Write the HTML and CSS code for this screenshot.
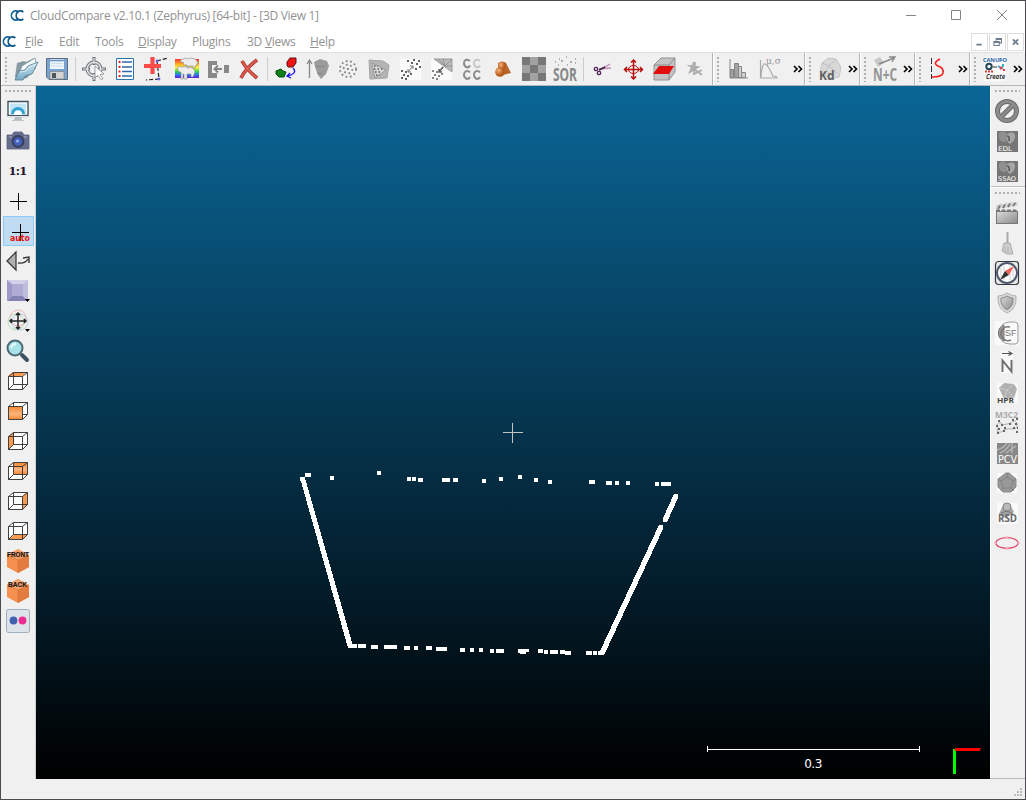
FILE: index.html
```
<!DOCTYPE html>
<html lang="en">
<head>
<meta charset="utf-8">
<title>CloudCompare v2.10.1 (Zephyrus) [64-bit] - [3D View 1]</title>
<link rel="stylesheet" href="styles.css">
</head>
<body>
<svg class="defs" width="0" height="0">
  <defs>
    <linearGradient id="blue" x1="0" y1="0" x2="0" y2="1"><stop offset="0" stop-color="#cdeaf5"/><stop offset="1" stop-color="#78a9c6"/></linearGradient>
    <linearGradient id="grey" x1="0" y1="0" x2="1" y2="1"><stop offset="0" stop-color="#d8d8d8"/><stop offset="1" stop-color="#8c8c8c"/></linearGradient>
    <linearGradient id="rain" x1="0" y1="0" x2="0" y2="1"><stop offset="0" stop-color="#f33"/><stop offset=".25" stop-color="#ffa51e"/><stop offset=".45" stop-color="#fff335"/><stop offset=".65" stop-color="#38d83a"/><stop offset=".82" stop-color="#267dff"/><stop offset="1" stop-color="#6818cf"/></linearGradient>
    <linearGradient id="orange" x1="0" y1="0" x2="0" y2="1"><stop offset="0" stop-color="#f58a35"/><stop offset=".6" stop-color="#ffb57d"/><stop offset="1" stop-color="#f58a35"/></linearGradient>
    <radialGradient id="copper" cx=".35" cy=".35"><stop offset="0" stop-color="#f5b078"/><stop offset="1" stop-color="#b65a1c"/></radialGradient>
    <g id="cc" fill="none" stroke-width="1.7"><path d="M9.500 4A4.300 4.600 0 1 0 9.500 11" stroke="#12649a"/><path d="M14.300 4A4.300 4.600 0 1 0 14.300 11" stroke="#0b5486"/></g>
    <path id="cube" d="M2.500 7.500h14v13h-14zM7.500 3.500h14v12h-14zM2.500 7.500l5-4M16.500 7.500l5-4M16.500 20.500l5-5M2.500 20.500l5-5" fill="none" stroke="#2c2c2c" stroke-width=".9"/>
    <g id="box"><path d="M12 0l11 6v12l-11 6-11-6V6z" fill="#f5904f"/><path d="M12 11l11-5v12l-11 6z" fill="#e27c40"/><path d="M1 6l11-6 11 6-11 5z" fill="#f9a36c"/><path d="M1 6l11 5 11-5M12 11v13" fill="none" stroke="#d06c35" stroke-width=".6"/></g>
    <g id="blob"><rect x="2" y="2" width="21" height="21" fill="#757575"/><path d="M4 4q7-4 8 3t-4 6q-5-1-4-9z" fill="#8f8f8f"/><path d="M12 5q7-4 8 1t-5 9q-4-2-3-10z" fill="#a6a6a6"/><path d="M12 7q3 0 2 5" stroke="#555" fill="none" stroke-width="1.500"/></g>
    <path id="more" d="M1 1l3 3-3 3M5.500 1l3 3-3 3" fill="none" stroke="#000" stroke-width="1.6"/>
  </defs>
</svg>
<div class="window">
  <header class="title">
    <svg class="logo" viewBox="0 0 15 15"><use href="#cc"/></svg>
    <span class="caption">CloudCompare v2.10.1 (Zephyrus) [64-bit] - [3D View 1]</span>
    <svg class="controls" viewBox="0 0 104 12"><path d="M0 6.500h10M45.500 1.500h9v9h-9zM91 1l10 10M101 1l-10 10" fill="none" stroke="#858585"/></svg>
  </header>
  <nav class="menu">
    <svg class="logo" viewBox="0 0 15 15"><use href="#cc"/></svg>
    <span class="m-file"><u>F</u>ile</span><span class="m-edit">Edit</span><span class="m-tools">Tools</span><span class="m-display"><u>D</u>isplay</span><span class="m-plugins">Plugins</span><span class="m-views">3D <u>V</u>iews</span><span class="m-help"><u>H</u>elp</span>
    <div class="mdi">
      <svg viewBox="0 0 17 17"><path d="M5 11.500h6" stroke="#6d7c8b" stroke-width="2"/></svg>
      <svg viewBox="0 0 17 17"><path d="M7 7V4.500h6v5h-2M7 5.500h6M4.500 8h6v4.500h-6zM4.500 9h6" fill="none" stroke="#6d7c8b" stroke-width="1.200"/></svg>
      <svg viewBox="0 0 17 17"><path d="M5.500 5.500l6 6M11.500 5.500l-6 6" stroke="#6d7c8b" stroke-width="2"/></svg>
    </div>
  </nav>

  <div class="tools">
    <section class="group main">
      <i class="grip"></i>
      <b><svg viewBox="0 0 24 24"><path d="M1 20L3 6l7-2 2 1 8-4 2 2v8l-9 10-9 2z" fill="#8799a3"/><path d="M4 19L8 9 21 1l1 5-9 12-9 5z" fill="#f5fafb" stroke="#70848e" stroke-width=".6"/><path d="M1 23l4-9 6-1 3-4 10-4-6 12-7 2-2 4z" fill="url(#blue)" stroke="#5d8194" stroke-width=".9"/><path d="M6 15l6-1 3-4 7-3" stroke="#e6f7fb" fill="none" stroke-width=".8"/></svg></b>
      <b><svg viewBox="0 0 24 24"><path d="M1.500 1.500h21v21H4l-2.500-2.500z" fill="#7ba3cf" stroke="#5a6c80"/><path d="M5 2h14v10H5z" fill="#edf5fc"/><path d="M5 3.500h14" stroke="#6d93c8" stroke-width="1.600"/><path d="M6 6.500h12M6 9h12" stroke="#cddcec"/><path d="M5 14.500h14V22H5z" fill="#d2d4d2" stroke="#7b8388" stroke-width=".7"/><path d="M7 16h4v5H7z" fill="#4c565d"/></svg></b>
      <i class="sep"></i>
      <b><svg viewBox="0 0 24 24"><circle cx="12" cy="12" r="6.800" fill="none" stroke="#6d7479" stroke-width="3.400"/><path d="M12 0v8M12 16v8M0 12h8M16 12h8" stroke="#6d7479" stroke-width="3"/><circle cx="12" cy="12" r="6.800" fill="none" stroke="#e3e5e7" stroke-width="1.500"/><path d="M12 1v6M12 17v6M1 12h6M17 12h6" stroke="#e3e5e7" stroke-width="1.200"/><path d="M13 9l9 8-4 .5 3 4-2 1-3-4-3 2z" fill="#fff" stroke="#888" stroke-width=".8"/></svg></b>
      <b><svg viewBox="0 0 24 24"><path d="M3.500 1.500h17v21h-17z" fill="#fff" stroke="#2d74aa"/><path d="M9 5h10M9 10h10M9 14.500h10M9 19h10" stroke="#2f65aa" stroke-width="1.600"/><path d="M5.500 5h2M5.500 10h2M5.500 14.500h2M5.500 19h2" stroke="#e42020" stroke-width="2"/></svg></b>
      <b><svg viewBox="0 0 24 24"><path d="M13 4L24 1M13 4l2 18-13 1" stroke="#222" stroke-width="1.200" stroke-dasharray="4 2" fill="none"/><path d="M8.500 0v17M0 9h17" stroke="#fa4b4b" stroke-width="4.200"/><circle cx="13" cy="4" r="1.400" fill="#5e62ec"/><circle cx="15" cy="22" r="1.400" fill="#5e62ec"/></svg></b>
      <b><svg viewBox="0 0 24 24"><path d="M0 2h24v19H0z" fill="url(#rain)"/><path d="M5 5q1-4 4-3 1-2 3 0 4-2 8 0l3 3-2 4h-1v2h-2V9h-4v2h-2V8H9L8 5zM2 11q2-3 5-1 6-2 10 1 3 1 3 4l-2 5h-2v-3h-4v5H9v-5H8v5H6v-7H4z" fill="#ededed" stroke="#858585" stroke-width=".6"/></svg></b>
      <b><svg viewBox="0 0 24 24"><path d="M2 4h9v4H6v8h5v5H2z" fill="#898989"/><path d="M8 12h8M12 8.500L8.500 12l3.500 3.500" stroke="#858585" stroke-width="2" fill="none"/><path d="M18 8h5v8h-5z" fill="#898989"/></svg></b>
      <b><svg viewBox="0 0 24 24"><path d="M5 4q5 9 15 17M20 3Q9 11 4 21" fill="none" stroke="#a73128" stroke-width="3.600"/><path d="M5 4q5 9 15 17M20 3Q9 11 4 21" fill="none" stroke="#dc5b4d" stroke-width="2"/></svg></b>
      <i class="sep"></i>
      <b><svg viewBox="0 0 24 24"><path d="M13 5l3-4h6v5l-3 4h-5l-1-2z" fill="#f01313" stroke="#631010"/><path d="M2 14l5-2 2 2 3 1-2 5H5l-3-3z" fill="#11811a" stroke="#064c0a"/><path d="M19 11q5 5-5 8M16 16l-3 3 4 2" fill="none" stroke="#1713e5" stroke-width="1.300"/></svg></b>
      <b><svg viewBox="0 0 24 24"><path d="M4.500 21V3M2 7l2.500-4L7 7" stroke="#8b8b8b" stroke-width="1.400" fill="none"/><path d="M9 5l6-3 7 2 2 5-3 8-5 5-3-4-3-8z" fill="#9b9b9b"/><path d="M11 9l4 1 5-1M12 16l5 1" stroke="#858585" fill="none"/></svg></b>
      <b><svg viewBox="0 0 24 24"><g fill="none" stroke="#858585" stroke-width="1.800" stroke-dasharray="1.800 2.600"><circle cx="12" cy="12" r="8"/><circle cx="12" cy="12" r="4.300"/><path d="M11 12h2"/></g></svg></b>
      <b><svg viewBox="0 0 24 24"><path d="M2 3l14 1 6 4-2 13-17 1z" fill="#b4b4b4" stroke="#a5a5a5"/><path d="M5 6l14 7-11 8z" fill="#d8d8d8" stroke="#999"/><path d="M7 9h4M7 12h10M8 15h7M9 18h4" stroke="#5b5b5b" stroke-width="1.400" stroke-dasharray="1.500 2"/></svg></b>
      <b><svg viewBox="0 0 24 24"><path d="M2 2h21v21H2z" fill="#fafafa"/><path d="M10 15l5-6M15 12V9h-3M10 12v3h3" stroke="#777" fill="none"/><path d="M9 4h2M15 3h2M20 4h2M18 7h2M13 6h2M21 10h2M17 12h2M3 14h2M7 15h2M5 18h2M9 19h2M12 17h2M3 21h2M7 22h2" stroke="#606060" stroke-width="1.800"/></svg></b>
      <b><svg viewBox="0 0 24 24"><path d="M2 2h21v21H2z" fill="#fafafa"/><path d="M5 2h18v13z" fill="#bbb" stroke="#999"/><path d="M9 2l7 7 7-7M16 9l7 0M10 15l5-5M14 2l2 7" fill="none" stroke="#888" stroke-width=".8"/><path d="M10 15l4-5M10 12v3h3M3 14h2M7 15h2M5 18h2M9 19h2M12 17h2M3 21h2M7 22h2" fill="none" stroke="#606060" stroke-width="1.500"/></svg></b>
      <b><svg viewBox="0 0 24 24"><g fill="none" stroke="#8c8c8c" stroke-width="2"><path d="M10 4Q8 2 5.500 3 4 4 4 6.500t3 4q2 0 3-2M10 15.500Q8 13 5.500 14.500 4 15.500 4 18t3 4q2 0 3-2M20 15.500q-2-2.500-4.500-1-1.500 1-1.500 3.500t3 4q2 0 3-2"/><path stroke="#c8c8c8" d="M20 4q-2-2-4.500-1Q14 4 14 6.500t3 4q2 0 3-2"/></g></svg></b>
      <b><svg viewBox="0 0 24 24"><path d="M7 6q4-3 8 0v8H7z" fill="url(#copper)"/><path d="M15 6l5 10-8 2z" fill="#b8652b"/><circle cx="9" cy="15" r="4.800" fill="url(#copper)"/></svg></b>
      <b><svg viewBox="0 0 24 24"><path d="M0 0h24v24H0z" fill="#777"/><path d="M8 0h8v8H8zM0 8h8v8H0zM16 8h8v8h-8zM8 16h8v8H8z" fill="#a2a2a2"/></svg></b>
      <b><svg viewBox="0 0 24 24"><path d="M2 5h1M6 2h1M8 4h2M13 0h1M17 5h2M22 2h1M22 6h1M5 8h1M14 8h1" stroke="#999" stroke-width="1.600"/><text x="12" y="24" class="sor" textLength="24" lengthAdjust="spacingAndGlyphs">SOR</text></svg></b>
      <i class="sep"></i>
      <b><svg viewBox="0 0 24 24"><path d="M10 13l10-6M9 12l12-1" stroke="#c08cbc" stroke-width="1.400"/><path d="M9 13l6-3" stroke="#332039" stroke-width="1.500"/><circle cx="6" cy="12" r="1.700" fill="none" stroke="#52205c" stroke-width="1.300"/><circle cx="9" cy="16" r="1.700" fill="none" stroke="#52205c" stroke-width="1.300"/></svg></b>
      <b><svg viewBox="0 0 24 24"><path d="M12.500 3v19M10 5.500L12.500 3 15 5.500M10 19.500l2.500 2.500 2.500-2.500M4 12.500h17M6 10l-2.500 2.500L6 15M19 10l2.500 2.500L19 15" fill="none" stroke="#bb0b0b" stroke-width="1.500"/><ellipse cx="12.500" cy="12.500" rx="5" ry="4" fill="none" stroke="#bb0b0b" stroke-width="1"/></svg></b>
      <b><svg viewBox="0 0 24 24"><path d="M2 8l7-7h14v14l-6 8H2z" fill="#c3c3c3" stroke="#929292"/><path d="M2 8h15v15M17 8l6-7" fill="none" stroke="#8b8b8b"/><path d="M1 17l6-8h15l-5 8z" fill="#e20d0d"/></svg></b>
      <b><svg viewBox="0 0 24 24"><path d="M11 5L7 15l8-5-8-1 12 9M12 5l-1 12 8-4" fill="none" stroke="#adadad" stroke-width="1.800"/></svg></b>
    </section>
    <section class="group stats">
      <i class="grip"></i>
      <b><svg viewBox="0 0 24 24"><path d="M3 2v19h18" fill="none" stroke="#888"/><path d="M3.500 12.500h3v8h-3zM7.500 6.500h4v14h-4z" fill="#a2a2a2" stroke="#858585"/><path d="M11.500 9.500h3v11h-3zM14.500 15.500h4v5h-4z" fill="#d0d0d0" stroke="#858585"/></svg></b>
      <b><svg viewBox="0 0 24 24"><path d="M2.500 3v18H20M3 20Q4 6 7 7t8 12l4 1" fill="none" stroke="#aaa" stroke-width="1.200"/><text x="8" y="7" class="mu">μ,σ</text></svg></b>
      <svg class="more" viewBox="0 0 10 8"><use href="#more"/></svg>
    </section>
    <section class="group small">
      <i class="grip"></i>
      <b><svg viewBox="0 0 24 24"><path d="M2 15l2-9 6-5 8 1 5 8-2 10-9 2z" fill="#d8d8d8" stroke="#c5c5c5"/><path d="M4 6l7 3 7-7M11 9l-4 8M11 9l8 7" stroke="#c0c0c0" fill="none"/><text x="1" y="23" class="kd">Kd</text></svg></b>
      <svg class="more" viewBox="0 0 10 8"><use href="#more"/></svg>
    </section>
    <section class="group small">
      <i class="grip"></i>
      <b><svg viewBox="0 0 24 24"><path d="M1 3l6-3 4 6-6 4z" fill="#c8c8c8"/><path d="M6 7l15-6M16 0h6l-3 5" fill="none" stroke="#888" stroke-width="1.400"/><text x="0" y="24" class="nc" textLength="24" lengthAdjust="spacingAndGlyphs">N+C</text></svg></b>
      <svg class="more" viewBox="0 0 10 8"><use href="#more"/></svg>
    </section>
    <section class="group small">
      <i class="grip"></i>
      <b><svg viewBox="0 0 24 24"><path d="M3.500 1v21" stroke="#333" stroke-dasharray="6 2"/><path d="M12 2q-8 4-2 7 6 2 5 7-1 4-11 4" fill="none" stroke="#fb1d1d" stroke-width="1.500"/></svg></b>
      <svg class="more" viewBox="0 0 10 8"><use href="#more"/></svg>
    </section>
    <section class="group small">
      <i class="grip"></i>
      <b><svg viewBox="0 0 24 24"><path d="M1 0h22v24H1z" fill="#fafafa"/><text x="0" y="5" class="canupo" textLength="24" lengthAdjust="spacingAndGlyphs">CANUPO</text><circle cx="6" cy="9.500" r="2.700" fill="none" stroke="#244358" stroke-width="2"/><path d="M2 14.500h9" stroke="#dd3d37" stroke-width="2" stroke-dasharray="2 1"/><path d="M10 10h4" stroke="#333"/><path d="M15 9l5 3M20 7v3" stroke="#40a6c7" stroke-width="2"/><path d="M17 12l2-2M21 12v2" stroke="#e33" stroke-width="2"/><text x="3" y="22" class="create" textLength="19" lengthAdjust="spacingAndGlyphs">Create</text></svg></b>
      <svg class="more" viewBox="0 0 10 8"><use href="#more"/></svg>
    </section>
  </div>

  <main class="work">
    <aside class="side left">
      <i class="hgrip"></i>
      <b><svg viewBox="0 0 24 24"><path d="M2 2.500h20v14H2z" fill="#fff" stroke="#3d5160" stroke-width="1.400"/><path d="M4 4.500h16v10H4z" fill="#c3e6f6"/><path d="M6.500 15a5.500 5.500 0 0 1 11 0" fill="none" stroke="#31a1d1" stroke-width="3"/><path d="M8 16a4 4 0 0 1 8 0z" fill="#fff"/><path d="M2 17h20v2H2z" fill="#dfe3e6"/><path d="M9 18h6l1 3H8z" fill="#b5bdc2"/><path d="M6 21.500h12" stroke="#bfc4c7"/></svg></b>
      <b><svg viewBox="0 0 24 24"><path d="M1 6h5l2-3h8l2 3h5v14H1z" fill="#666d8c" stroke="#5a5f7e" stroke-width=".8"/><circle cx="12" cy="12.500" r="6.500" fill="#3a4060"/><circle cx="12" cy="12.500" r="4.300" fill="#4360ba"/><circle cx="11.500" cy="12" r="1.600" fill="#98aef0"/><path d="M3 8h3M18 8h3" stroke="#a7aec9"/></svg></b>
      <b class="ratio">1:1</b>
      <b><svg viewBox="0 0 24 24"><path d="M12.500 4v17M4 12.500h17" stroke="#000" shape-rendering="crispEdges"/></svg></b>
      <b class="active"><svg viewBox="0 0 24 24"><path d="M13.500 5v17M5 13.500h17" stroke="#000" shape-rendering="crispEdges"/><text x="3" y="22" class="auto" textLength="20" lengthAdjust="spacingAndGlyphs">auto</text></svg></b>
      <b><svg viewBox="0 0 24 24"><path d="M1 12l9-9v18z" fill="#b0b0b0" stroke="#333" stroke-width="1.200"/><path d="M12 14q7 1 10-4M17 9l6-1v6" fill="none" stroke="#333" stroke-width="1.400"/></svg></b>
      <b><svg viewBox="0 0 24 24"><path d="M1 1h21v21H1z" fill="#d3d1ea"/><path d="M1 1l5 4v12l-5 5z" fill="#9c99c6"/><path d="M1 22l5-5h11l5 5z" fill="#8583b3"/><path d="M17 5l5-4v21l-5-5z" fill="#c0bedd"/><path d="M6 5h11v12H6z" fill="#aeabd5"/><path d="M19 20h5l-2.500 3z"/></svg></b>
      <b><svg viewBox="0 0 24 24"><g fill="none" stroke-width="1"><circle cx="12" cy="9" r="8" stroke="#f3b5b5"/><circle cx="10" cy="13" r="8" stroke="#b5dfb6"/><circle cx="14" cy="13" r="8" stroke="#b9d0ea"/></g><path d="M12 4v16M4 12h16M10 6l2-2 2 2M10 18l2 2 2-2M6 10l-2 2 2 2M18 10l2 2-2 2" stroke="#242424" stroke-width="1.500" fill="none"/><path d="M19 20h5l-2.500 3z"/></svg></b>
      <b><svg viewBox="0 0 24 24"><path d="M16 16l5 5" stroke="#3e5263" stroke-width="4" stroke-linecap="round"/><circle cx="9" cy="9" r="7.500" fill="#a9e3e9" stroke="#4e6873" stroke-width="2"/><path d="M5 9q1-4 5-4" stroke="#e8ffff" stroke-width="2" fill="none"/></svg></b>
      <b><svg viewBox="0 0 24 24"><path d="M2 7l5-4h14v12l-5 5H2z" fill="#fff"/><path d="M2 7l5-4h14l-5 4z" fill="#f99a51"/><use href="#cube"/></svg></b>
      <b><svg viewBox="0 0 24 24"><path d="M2 7l5-4h14v12l-5 5H2z" fill="#fff"/><use href="#cube"/><path d="M3 8h13v12H3z" fill="url(#orange)"/></svg></b>
      <b><svg viewBox="0 0 24 24"><path d="M2 7l5-4h14v12l-5 5H2z" fill="#fff"/><path d="M3 7l5-4v12l-5 5z" fill="#f99a51"/><use href="#cube"/></svg></b>
      <b><svg viewBox="0 0 24 24"><path d="M2 7l5-4h14v12l-5 5H2z" fill="#fff"/><path d="M8 4h13v11H8z" fill="url(#orange)"/><use href="#cube"/></svg></b>
      <b><svg viewBox="0 0 24 24"><path d="M2 7l5-4h14v12l-5 5H2z" fill="#fff"/><path d="M17 7l4-4v12l-4 5z" fill="#f99a51"/><use href="#cube"/></svg></b>
      <b><svg viewBox="0 0 24 24"><path d="M2 7l5-4h14v12l-5 5H2z" fill="#fff"/><path d="M3 20l5-4h13l-4 4z" fill="#f99a51"/><use href="#cube"/></svg></b>
      <b><svg viewBox="0 0 24 24"><use href="#box"/><text x="1" y="8" class="face" textLength="22" lengthAdjust="spacingAndGlyphs">FRONT</text></svg></b>
      <b><svg viewBox="0 0 24 24"><use href="#box"/><text x="2" y="8" class="face" textLength="19" lengthAdjust="spacingAndGlyphs">BACK</text></svg></b>
      <b><svg viewBox="0 0 24 24"><rect x=".5" y=".5" width="23" height="23" rx="2" fill="#dce3e9" stroke="#a3afb9"/><circle cx="7.500" cy="11.500" r="3.900" fill="#4160ae"/><circle cx="16.500" cy="11.500" r="3.900" fill="#ee2b91"/></svg></b>
    </aside>

    <svg class="view" viewBox="36 86 954 693">
      <path d="M503 432.500h20M512.500 423v20" stroke="#c4c4c4" shape-rendering="crispEdges"/>
      <path class="points" d="M305 473h6v4h-6zM300 477h5v4h-5zM330 476h4v4h-4zM377 471h4v4h-4zM407 477h4v4h-4zM412 477h4v4h-4zM418 478h5v4h-5zM442 478h8v4h-8zM453 478h5v4h-5zM482 479h4v4h-4zM499 477h4v4h-4zM518 475h4v4h-4zM534 478h4v4h-4zM548 480h4v4h-4zM589 480h6v4h-6zM606 481h6v4h-6zM615 481h4v4h-4zM626 481h4v4h-4zM655 482h4v4h-4zM661 482h10v4h-10z"/>
      <path class="points" d="M348 644h9v4h-9zM358 644h8v4h-8zM371 645h7v4h-7zM384 645h13v4h-13zM404 646h6v4h-6zM414 646h4v4h-4zM426 646h6v4h-6zM436 647h11v4h-11zM460 648h5v4h-5zM470 648h4v4h-4zM479 648h4v4h-4zM490 649h4v4h-4zM496 649h8v4h-8zM518 649h11v3h-3v2h-6v-1h-2zM538 649h5v4h-5zM544 650h4v4h-4zM550 650h8v4h-8zM560 650h5v4h-5zM565 651h6v4h-6zM586 651h6v4h-6zM593 651h4v4h-4zM598 651h6v4h-6z"/>
      <path class="points" d="M300 478h5l48 168-1 2h-4zM674 494h4v4l-11 24h-4v-4zM659 525h4v4l-58 124-1 2h-4v-4z"/>
      <path d="M707.500 746v6M707 749h213M919.500 746v6" stroke="#fff" stroke-width="1" shape-rendering="crispEdges"/>
      <text x="813" y="768" class="scale">0.3</text>
      <path d="M953 749h3v25h-3z" fill="#0f0"/><path d="M955 748h26v1h-1v2h-25z" fill="#f00"/>
    </svg>

    <aside class="side right">
      <i class="hgrip"></i>
      <b><svg viewBox="0 0 24 24"><circle cx="12" cy="12" r="9.500" fill="none" stroke="#686868" stroke-width="5"/><path d="M5 19L19 5" stroke="#686868" stroke-width="5"/><circle cx="12" cy="12" r="9.500" fill="none" stroke="#8c8c8c" stroke-width="3"/><path d="M5 19L19 5" stroke="#8c8c8c" stroke-width="3"/></svg></b>
      <b><svg viewBox="0 0 24 24"><use href="#blob"/><text x="3" y="22" class="tag" textLength="14" lengthAdjust="spacingAndGlyphs">EDL</text></svg></b>
      <b><svg viewBox="0 0 24 24"><use href="#blob"/><text x="3" y="22" class="tag" textLength="18" lengthAdjust="spacingAndGlyphs">SSAO</text></svg></b>
      <i class="rule"></i>
      <i class="hgrip second"></i>
      <b><svg viewBox="0 0 24 24"><path d="M1 10h22v13H1z" fill="#777"/><path d="M2 11h20v11H2z" fill="url(#grey)"/><path d="M1 4l21-3 1 4L1 8z" fill="#d5d5d5"/><path d="M3 8l3-5M8 7l3-5M13 6l3-5M18 5l3-4M1 9.500h22" stroke="#777" stroke-width="1.800" stroke-dasharray="4 1.500"/></svg></b>
      <b><svg viewBox="0 0 24 24"><path d="M12.500 1v12" stroke="#aaa" stroke-width="2"/><path d="M9 12h6l3 11-6 0-5-3z" fill="#cdcdcd" stroke="#adadad"/><path d="M10 16v5M13 16v6" stroke="#b5b5b5"/></svg></b>
      <b><svg viewBox="0 0 24 24"><rect x=".5" y=".5" width="23" height="23" rx="3" fill="#e8e8e8" stroke="#353b43" stroke-width="1.200"/><circle cx="12" cy="12" r="10" fill="#fff" stroke="#4d596b" stroke-width="2"/><path d="M6 7v10M9 5v14M15 5v14M18 7v10" stroke="#ccc"/><path d="M19 5l-5 9-4-4z" fill="#ef6058"/><path d="M5 19l5-9 4 4z" fill="#333"/></svg></b>
      <b><svg viewBox="0 0 24 24"><path d="M12 2q5 3 9 3 1 13-9 17Q2 18 3 5q5 0 9-3z" fill="#dadada" stroke="#b0b0b0"/><path d="M12 5q3 2 6 2 1 8-6 12-7-4-6-12 3 0 6-2z" fill="url(#grey)" stroke="#888"/></svg></b>
      <b><svg viewBox="0 0 24 24"><path d="M0 0h24v24H0z" fill="#fafafa"/><path d="M9 4a8.500 8.500 0 0 0 0 16z" fill="#999" stroke="#777"/><path d="M7 4q3-3 8-3h5q3 0 3 3v16q0 3-3 3h-5q-5 0-8-3" fill="none" stroke="#999"/><path d="M15 6a7 7 0 1 0 1 13" fill="none" stroke="#777" stroke-width="1.500"/><text x="10" y="15" class="sf">SF</text></svg></b>
      <b><svg viewBox="0 0 24 24"><path d="M6 0h12v22H6z" fill="#fafafa"/><path d="M7 2.500h10M13.500.5l3.500 2-3.500 2" fill="none" stroke="#555" stroke-width="1.200"/><path d="M7.500 21V9.500l9 11V9" fill="none" stroke="#6c6c6c" stroke-width="1.900"/></svg></b>
      <b><svg viewBox="0 0 24 24"><path d="M2 2h21v20H2z" fill="#fafafa"/><path d="M4 7l5-5 10 1 3 5-3 9-10 1z" fill="#b0b0b0"/><path d="M4 7l8 2 7-6M12 9l7 8M12 9l-3 9" fill="none" stroke="#c9c9c9"/><text x="2" y="22" class="hpr" textLength="17" lengthAdjust="spacingAndGlyphs">HPR</text></svg></b>
      <b><svg viewBox="0 0 24 24"><text x="0" y="7" class="m3" textLength="23" lengthAdjust="spacingAndGlyphs">M3C2</text><path d="M2 14q3-5 6 0l8-2q3-4 6 0 1 6-4 6-5-1-9 1-4 4-7 1 2-3 0-6z" fill="#ececec" stroke="#b0b0b0"/><path d="M3 10h2M1 15h2M6 14h2M3 18h2M9 17h2M2 22h2M8 20h2M14 13h2M17 9h2M21 8h2M20 13h2M18 17h2M22 17h1M21 21h2" stroke="#666" stroke-width="1.800"/></svg></b>
      <b><svg viewBox="0 0 24 24"><path d="M2 2h21v21H2z" fill="#888"/><path d="M2 9q7-2 10-7M5 12q7-3 10-9M11 12l10-7M17 12V2" stroke="#bcbcbc" fill="none" stroke-width="1.200"/><text x="3" y="22" class="pcv" textLength="19" lengthAdjust="spacingAndGlyphs">PCV</text></svg></b>
      <b><svg viewBox="0 0 24 24"><path d="M2 2h20v20H2z" fill="#fafafa"/><path d="M11 2h3l7 6v8l-5 5H8l-5-5V8z" fill="#999" stroke="#888"/><path d="M12 6l6 4-2 7H8L6 10zM12 2v4M18 10l3-2M6 10L3 8M16 17l3 3M8 17l-2 3" stroke="#7c7c7c" fill="none" stroke-width=".8"/></svg></b>
      <b><svg viewBox="0 0 24 24"><path d="M2 2h21v21H2z" fill="#fafafa"/><path d="M9 2h5l5 9-8 6-7-4z" fill="#a5a5a5"/><circle cx="12" cy="6" r="4" fill="#b8b8b8" stroke="#888"/><path d="M6 12l6-2 6 3" stroke="#777" fill="none"/><text x="3" y="21" class="rsd" textLength="19" lengthAdjust="spacingAndGlyphs">RSD</text></svg></b>
      <b><svg viewBox="0 0 24 24"><ellipse cx="12" cy="12" rx="11.200" ry="5.300" fill="none" stroke="#e23a62" stroke-width="1.200"/><path d="M10.500 6.500h3M10.500 17.500h3M.5 11v2M23.500 11v2" stroke="#ffa4b7" stroke-width="2"/></svg></b>
    </aside>
  </main>
  <footer class="status"><i class="edge"></i><svg viewBox="0 0 9 9"><path d="M6 0h2v2H6zM3 3h2v2H3zM6 3h2v2H6zM0 6h2v2H0zM3 6h2v2H3zM6 6h2v2H6z" fill="#bcbcbc"/></svg></footer>
</div>
</body>
</html>
```
FILE: styles.css
```
* { box-sizing: border-box; }
body { margin: 0; font-family: "Open Sans", "Noto Sans", sans-serif; font-size: 12px; color: #929292; }
.defs { display: block; }
.window { width: 1026px; height: 800px; border: 1px solid #4c4a50; background: #f0f0f0; display: flex; flex-direction: column; overflow: hidden; }
.title { height: 30px; background: #fff; display: flex; align-items: center; padding: 0 15px 2px 8px; flex: none; }
.logo { width: 15px; height: 15px; flex: none; }
.caption { margin-left: 6px; white-space: nowrap; letter-spacing: -.31px; font-size: 12px; }
.controls { width: 104px; height: 12px; margin-left: auto; }
.menu { height: 21px; background: #fff; display: flex; align-items: center; padding-left: 0; flex: none; }
.menu > span { white-space: nowrap; letter-spacing: -.27px; }
.menu u { text-underline-offset: 1px; text-decoration-thickness: 1px; }
.menu .m-file { width: 34px; margin-left: 9px; }
.m-edit { width: 36px; }
.m-tools { width: 43px; }
.m-display { width: 54px; }
.m-plugins { width: 55px; }
.m-views { width: 63px; }
.mdi { display: flex; gap: 1px; margin-left: auto; padding-right: 1px; }
.mdi svg { width: 17px; height: 18px; border: 1px solid #dedede; }
.tools { display: flex; height: 34px; border-top: 1px solid #e0e0e0; border-bottom: 1px solid #b5b5b5; flex: none; }
.group { display: flex; align-items: center; width: 55px; height: 32px; border-right: 1px solid #b5b5b5; box-shadow: inset 1px 0 #fff; flex: none; }
.group.main { width: 712px; }
.group.stats { width: 92px; }
.group:last-child { border-right: 0; }
.group b, .side b { display: flex; align-items: center; justify-content: center; flex: none; }
.group b { width: 31px; height: 31px; }
.group b svg, .side b svg { width: 24px; height: 24px; display: block; overflow: visible; }
.grip { width: 10px; height: 26px; background: radial-gradient(circle at 5px 2px, #b0b0b0 1.1px, transparent 1.4px) 0 0 / 10px 4px; flex: none; }
.main .grip { width: 9px; }
.small .grip { width: 9px; }
.sep { width: 6px; height: 24px; flex: none; background: linear-gradient(#ccc, #ccc) center / 1px 100% no-repeat; }
.more { width: 10px; height: 8px; margin-left: 3px; flex: none; }
.stats .more { margin-left: 8px; }
.work { display: flex; height: 693px; flex: none; }
.side { width: 35px; border-right: 1px solid #d0d0d0; }
.left { padding-right: 1px; }
.right { border-right: 0; border-left: 1px solid #fff; padding-right: 2px; }
.side b { height: 30px; }
.hgrip { display: block; height: 10px; margin: 0 3px; background: radial-gradient(circle at 2px 5px, #b0b0b0 1.1px, transparent 1.4px) 0 0 / 4px 10px; }
.rule { display: block; height: 2px; margin-right: -2px; border-top: 1px solid #bcbcbc; border-bottom: 1px solid #fff; }
.side .active { margin: 0 0 0 2px; background: #c0dcf3; border: 1px solid #90c8f6; }
.side .ratio { color: #241027; font: bold 11.5px "DejaVu Serif", serif; letter-spacing: -.8px; }
.view { width: 954px; height: 693px; background: linear-gradient(#0a6697, #000); display: block; flex: none; }
.points { fill: #fff; shape-rendering: crispEdges; }
.scale { fill: #fff; font: 12px "DejaVu Sans", sans-serif; letter-spacing: -.5px; text-anchor: middle; }
.status { display: flex; flex-direction: column; align-items: flex-end; justify-content: space-between; flex: 1; padding: 0 2px 2px 0; }
.edge { width: 35px; height: 1px; margin-right: -2px; background: #bcbcbc; margin-top: -1px; }
.status svg { width: 9px; height: 9px; }
.sor { font: bold 17px "Open Sans", sans-serif; fill: #888; text-anchor: middle; }
.mu { font: 9px "DejaVu Serif", serif; fill: #999; }
.kd { font: bold 12px "Open Sans", sans-serif; fill: #626262; }
.nc { font: bold 18px "Open Sans", sans-serif; fill: #949494; }
.canupo { font: bold 6px "Open Sans", sans-serif; fill: #2460a8; }
.create { font: italic bold 7px "Open Sans", sans-serif; fill: #333; }
.auto { font: bold 9px "DejaVu Sans", sans-serif; fill: #e31212; }
.face { font: bold 7.5px "Liberation Sans", sans-serif; fill: #1b1715; stroke: #1b1715; stroke-width: .2px; }
.tag { font: 6.5px "DejaVu Sans", sans-serif; fill: #fff; }
.sf { font: 9px "Liberation Sans", sans-serif; fill: #777; }
.hpr { font: bold 7.5px "Open Sans", sans-serif; fill: #444; }
.m3 { font: bold 8.5px "Open Sans", sans-serif; fill: #aaa; }
.pcv { font: 10px "DejaVu Sans", sans-serif; fill: #fff; }
.rsd { font: bold 10px "Open Sans", sans-serif; fill: #666; }
```
